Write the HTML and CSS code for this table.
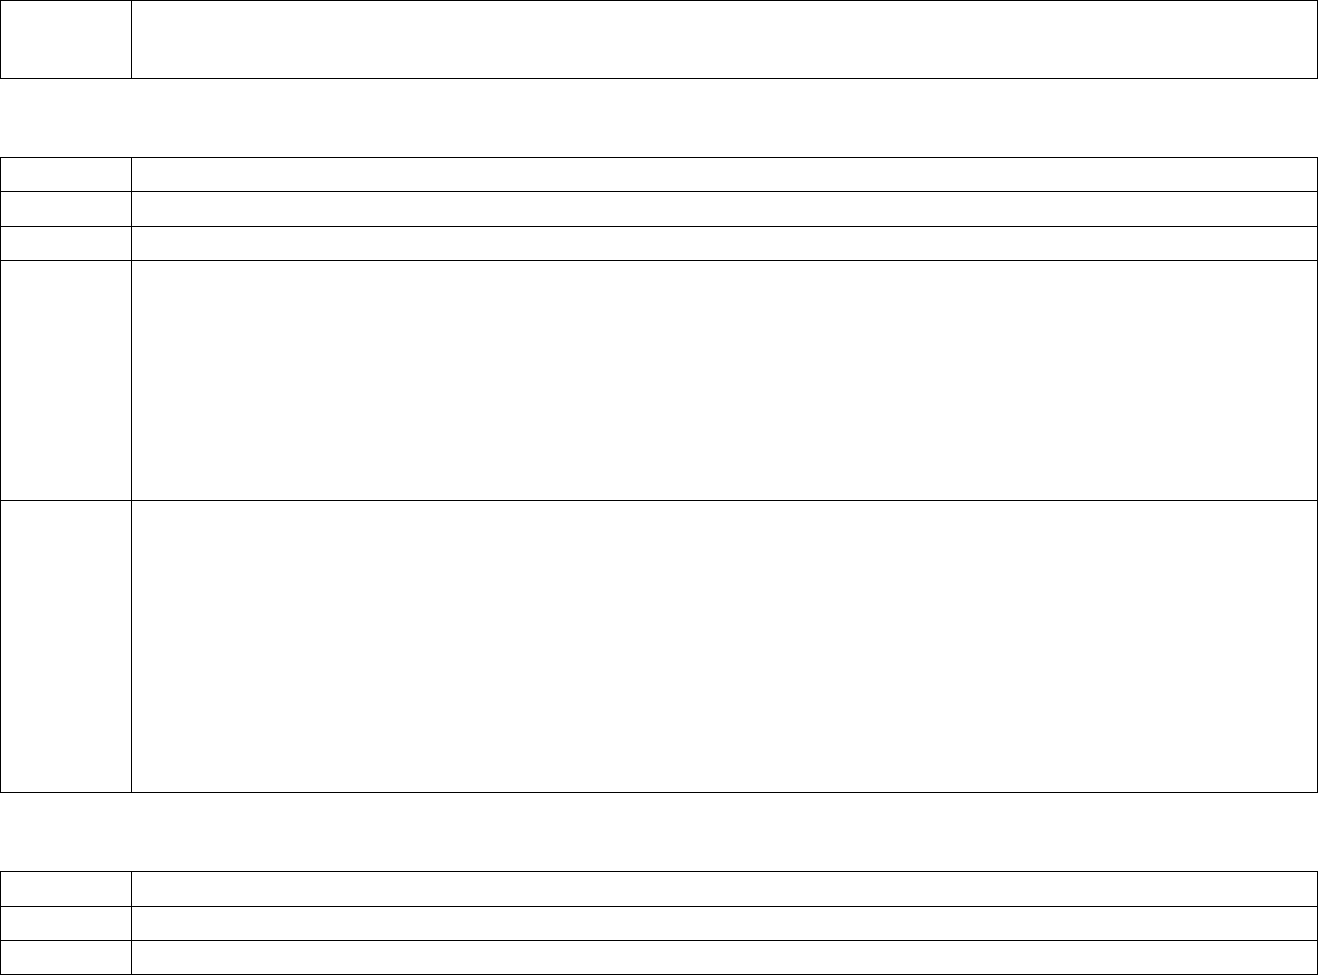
FILE: index.html
```html
<!DOCTYPE html>
<html lang="en">
<head>
<meta charset="utf-8">
<title>Tables</title>
<link rel="stylesheet" href="styles.css">
</head>
<body>
<div class="page">
  <div class="tbl">
    <div class="cell h78"></div><div class="cell h78"></div>
  </div>
  <div class="tbl">
    <div class="cell h34"></div><div class="cell h34"></div>
    <div class="cell h35"></div><div class="cell h35"></div>
    <div class="cell h34"></div><div class="cell h34"></div>
    <div class="cell h240"></div><div class="cell h240"></div>
    <div class="cell h292"></div><div class="cell h292"></div>
  </div>
  <div class="tbl">
    <div class="cell h35"></div><div class="cell h35"></div>
    <div class="cell h34"></div><div class="cell h34"></div>
    <div class="cell h34"></div><div class="cell h34"></div>
  </div>
</div>
</body>
</html>
```
FILE: styles.css
```css
html, body {
  margin: 0;
  padding: 0;
  background: #fff;
  font-family: "Liberation Sans", Arial, sans-serif;
}
.page {
  display: flex;
  flex-direction: column;
  gap: 78px;
  width: 1318px;
}
.tbl {
  display: grid;
  grid-template-columns: 131px 1fr;
  border-top: 1px solid #000;
  border-left: 1px solid #000;
}
.cell {
  box-sizing: border-box;
  border-right: 1px solid #000;
  border-bottom: 1px solid #000;
}
.h34 { height: 34px; }
.h35 { height: 35px; }
.h78 { height: 78px; }
.h240 { height: 240px; }
.h292 { height: 292px; }
```
